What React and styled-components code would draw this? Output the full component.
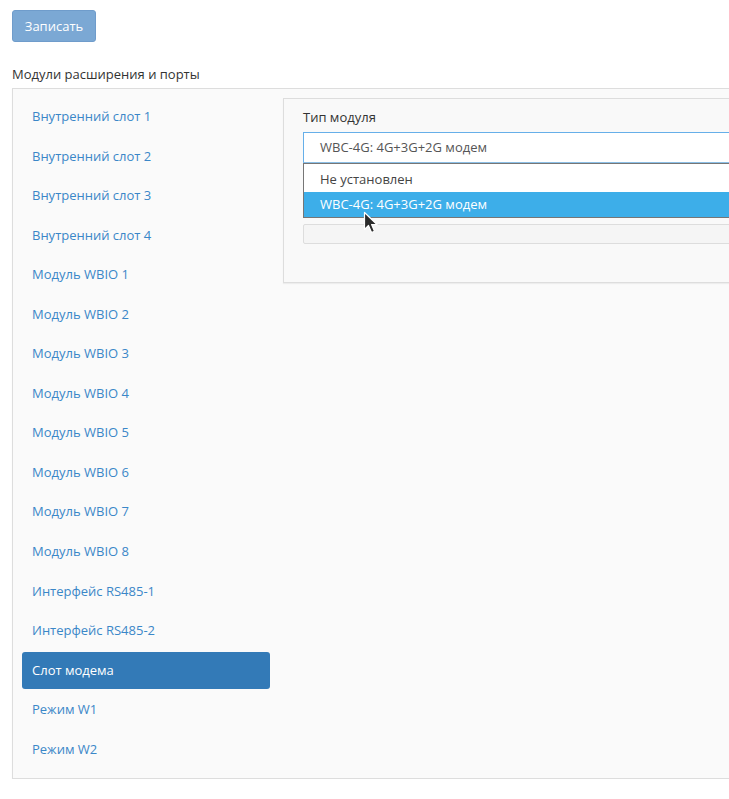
import React from "react";
import styled, { createGlobalStyle } from "styled-components";

const Global = createGlobalStyle`
  html, body { margin: 0; padding: 0; background: #fff; overflow: hidden; }
  body { font-family: "Open Sans", "Liberation Sans", sans-serif; font-size: 13px; color: #333; }
`;

const Page = styled.div`
  width: 800px;
  padding: 10px 0 0 12px;
`;

const SaveButton = styled.button`
  font-family: inherit;
  font-size: 13px;
  color: #fff;
  background: #7ba8d4;
  border: 1px solid #6f9ccb;
  border-radius: 3px;
  height: 32px;
  width: 84px;
  padding: 0;
  cursor: not-allowed;
`;

const SectionTitle = styled.div`
  margin-top: 22px;
  line-height: 20px;
  height: 20px;
  color: #333;
`;

const Panel = styled.div`
  margin-top: 4px;
  width: 780px;
  border: 1px solid #ddd;
  background: #fafafa;
  box-shadow: 0 1px 1px rgba(0,0,0,0.05);
  display: flex;
  align-items: flex-start;
  padding: 9px 0 10px 9px;
  box-sizing: border-box;
`;

const Nav = styled.ul`
  list-style: none;
  margin: 0;
  padding: 0;
  width: 248px;
  display: flex;
  flex-direction: column;
  gap: 2px;
`;

const NavItem = styled.li`
  height: 37.55px;
  line-height: 37.55px;
  padding-left: 10px;
  border-radius: 3px;
  color: ${p => (p.$active ? "#fff" : "#3a87c8")};
  background: ${p => (p.$active ? "#337ab7" : "transparent")};
`;

const Content = styled.div`
  margin-left: 13px;
  flex: 1;
  border: 1px solid #ddd;
  background: #f9f9f9;
  box-shadow: 0 1px 1px rgba(0,0,0,0.05);
  padding: 8px 19px 38px 19px;
  position: relative;
`;

const FieldLabel = styled.div`
  line-height: 20px;
  height: 20px;
  margin-bottom: 5px;
  color: #333;
`;

const SelectBox = styled.div`
  height: 31px;
  box-sizing: border-box;
  border: 1px solid #66afe9;
  border-bottom-color: #8cbfe6;
  background: #fff;
  padding-left: 16px;
  line-height: 29px;
  color: #555;
`;

const DropList = styled.div`
  border: 1px solid #767676;
  background: #fff;
  padding-top: 3px;
`;

const Option = styled.div`
  height: 25px;
  line-height: 25px;
  padding-left: 16px;
  color: ${p => (p.$hl ? "#fff" : "#444")};
  background: ${p => (p.$hl ? "#3daee9" : "transparent")};
`;

const Bar = styled.div`
  margin-top: 6px;
  height: 20px;
  box-sizing: border-box;
  border: 1px solid #ddd;
  border-radius: 2px;
  background: #f5f5f5;
`;

const Cursor = styled.svg`
  position: absolute;
  left: 79px;
  top: 112px;
  width: 16px;
  height: 24px;
`;

const items = [
  "Внутренний слот 1",
  "Внутренний слот 2",
  "Внутренний слот 3",
  "Внутренний слот 4",
  "Модуль WBIO 1",
  "Модуль WBIO 2",
  "Модуль WBIO 3",
  "Модуль WBIO 4",
  "Модуль WBIO 5",
  "Модуль WBIO 6",
  "Модуль WBIO 7",
  "Модуль WBIO 8",
  "Интерфейс RS485-1",
  "Интерфейс RS485-2",
  "Слот модема",
  "Режим W1",
  "Режим W2",
];

export default function App() {
  return (
    <>
      <Global />
      <Page>
        <SaveButton>Записать</SaveButton>
        <SectionTitle>Модули расширения и порты</SectionTitle>
        <Panel>
          <Nav>
            {items.map(t => (
              <NavItem key={t} $active={t === "Слот модема"}>{t}</NavItem>
            ))}
          </Nav>
          <Content>
            <FieldLabel>Тип модуля</FieldLabel>
            <SelectBox>WBC-4G: 4G+3G+2G модем</SelectBox>
            <DropList>
              <Option>Не установлен</Option>
              <Option $hl>WBC-4G: 4G+3G+2G модем</Option>
            </DropList>
            <Bar />
            <Cursor viewBox="0 0 16 24">
              <path d="M1.5 1.5 L1.5 18.5 L5.5 14.5 L8.5 21.5 L11.5 20.2 L8.6 13.5 L14 13.5 Z" fill="#2b2b2b" stroke="#fff" strokeWidth="1.2" strokeLinejoin="round" />
            </Cursor>
          </Content>
        </Panel>
      </Page>
    </>
  );
}
